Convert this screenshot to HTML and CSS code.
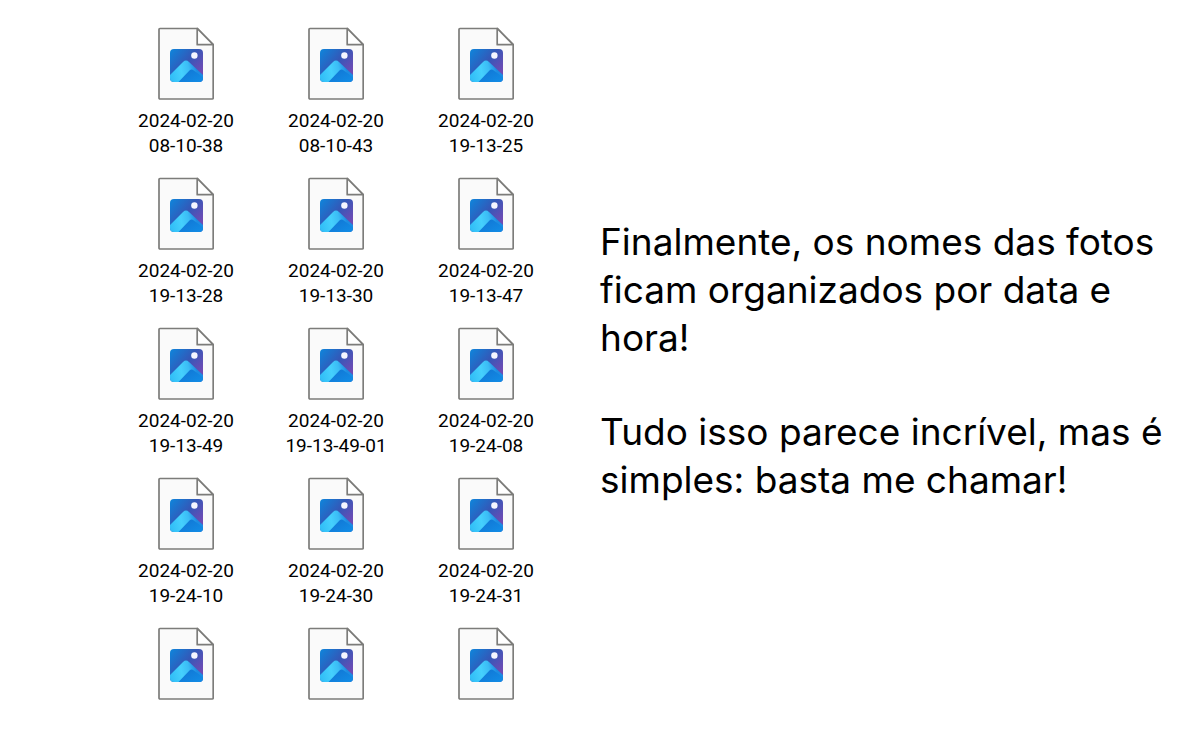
FILE: index.html
```html
<!DOCTYPE html>
<html lang="pt-BR">
<head>
    <meta charset="UTF-8">
    <meta name="viewport" content="width=device-width, initial-scale=1.0">
    <title>Fotos organizadas por data e hora</title>
    <link rel="stylesheet" href="styles.css">
</head>
<body>
    <!-- Shared photo file icon -->
    <svg class="icon-defs" aria-hidden="true">
        <defs>
            <linearGradient id="sky" x1="0" y1="0" x2="1" y2="0.8">
                <stop offset="0" stop-color="#0d86dc"/>
                <stop offset="0.5" stop-color="#3358b8"/>
                <stop offset="0.9" stop-color="#6f4bb4"/>
            </linearGradient>
            <linearGradient id="ridge" gradientUnits="userSpaceOnUse" x1="12" y1="50" x2="42" y2="44">
                <stop offset="0" stop-color="#30bdf6"/>
                <stop offset="0.4" stop-color="#45d0fd"/>
                <stop offset="0.65" stop-color="#3bbcf6"/>
                <stop offset="0.9" stop-color="#1c8ce2"/>
            </linearGradient>
            <linearGradient id="slope" x1="0" y1="0" x2="1" y2="1">
                <stop offset="0" stop-color="#1173d2"/>
                <stop offset="1" stop-color="#128fe8"/>
            </linearGradient>
            <clipPath id="photo">
                <rect x="12" y="22" width="33" height="33" rx="4"/>
            </clipPath>
            <symbol id="photo-file" viewBox="0 0 56 74">
                <path d="M1 2.5Q1 1.5 2 1.5H39.5L55.2 17.7V71Q55.2 72 54.2 72H2Q1 72 1 71Z" fill="#fafafa" stroke="#7c7c7a" stroke-width="1.7"/>
                <path d="M39.2 1.5V17.7H55.2Z" fill="#fff" stroke="#7c7c7a" stroke-width="1.7" stroke-linejoin="round"/>
                <g clip-path="url(#photo)">
                    <rect x="12" y="22" width="33" height="33" fill="url(#sky)"/>
                    <path d="M10 50L25 35Q28 32.2 31 35L46 49V56H10Z" fill="url(#ridge)"/>
                    <path d="M31.5 43.5Q33.5 41.5 35.5 43.3L46 51V56H19.5Z" fill="url(#slope)"/>
                    <circle cx="36.4" cy="28.5" r="3.2" fill="#f4f5ff"/>
                </g>
            </symbol>
        </defs>
    </svg>

    <main class="page">
        <ul class="files">
            <li class="file"><svg class="file-icon"><use href="#photo-file"/></svg><p>2024-02-20<br>08-10-38</p></li>
            <li class="file"><svg class="file-icon"><use href="#photo-file"/></svg><p>2024-02-20<br>08-10-43</p></li>
            <li class="file"><svg class="file-icon"><use href="#photo-file"/></svg><p>2024-02-20<br>19-13-25</p></li>

            <li class="file"><svg class="file-icon"><use href="#photo-file"/></svg><p>2024-02-20<br>19-13-28</p></li>
            <li class="file"><svg class="file-icon"><use href="#photo-file"/></svg><p>2024-02-20<br>19-13-30</p></li>
            <li class="file"><svg class="file-icon"><use href="#photo-file"/></svg><p>2024-02-20<br>19-13-47</p></li>

            <li class="file"><svg class="file-icon"><use href="#photo-file"/></svg><p>2024-02-20<br>19-13-49</p></li>
            <li class="file"><svg class="file-icon"><use href="#photo-file"/></svg><p>2024-02-20<br>19-13-49-01</p></li>
            <li class="file"><svg class="file-icon"><use href="#photo-file"/></svg><p>2024-02-20<br>19-24-08</p></li>

            <li class="file"><svg class="file-icon"><use href="#photo-file"/></svg><p>2024-02-20<br>19-24-10</p></li>
            <li class="file"><svg class="file-icon"><use href="#photo-file"/></svg><p>2024-02-20<br>19-24-30</p></li>
            <li class="file"><svg class="file-icon"><use href="#photo-file"/></svg><p>2024-02-20<br>19-24-31</p></li>

            <li class="file"><svg class="file-icon"><use href="#photo-file"/></svg></li>
            <li class="file"><svg class="file-icon"><use href="#photo-file"/></svg></li>
            <li class="file"><svg class="file-icon"><use href="#photo-file"/></svg></li>
        </ul>

        <div class="message">
            <p>Finalmente, os nomes das fotos ficam organizados por data e hora!</p>
            <p>Tudo isso parece incrível, mas é simples: basta me chamar!</p>
        </div>
    </main>
</body>
</html>
```
FILE: styles.css
```css
* {
    margin: 0;
    padding: 0;
    box-sizing: border-box;
}

body {
    background: #fff;
    color: #000;
    font-family: Roboto, "Open Sans", sans-serif;
}

.icon-defs {
    position: absolute;
    width: 0;
    height: 0;
}

.page {
    display: grid;
    grid-template-columns: 1fr 1fr;
    align-items: center;
    min-height: 100vh;
}

/* File grid */
.files {
    display: grid;
    grid-template-columns: repeat(3, 150px);
    justify-content: end;
    row-gap: 19px;
    padding: 27px 39px 28px 0;
    list-style: none;
}

.file {
    display: flex;
    flex-direction: column;
    align-items: center;
    gap: 7px;
    font-size: 19px;
    line-height: 25px;
    text-align: center;
}

.file-icon {
    width: 56px;
    height: 74px;
}

/* Message */
.message {
    display: grid;
    gap: 46px;
    padding: 0 24px 8px 0;
    font-family: Inter, "Open Sans", sans-serif;
    font-size: 37px;
    line-height: 48px;
}

@media (max-width: 1000px) {
    .page {
        grid-template-columns: 1fr;
    }

    .files {
        justify-content: center;
        padding-right: 0;
    }

    .message {
        padding: 24px;
    }
}
```
